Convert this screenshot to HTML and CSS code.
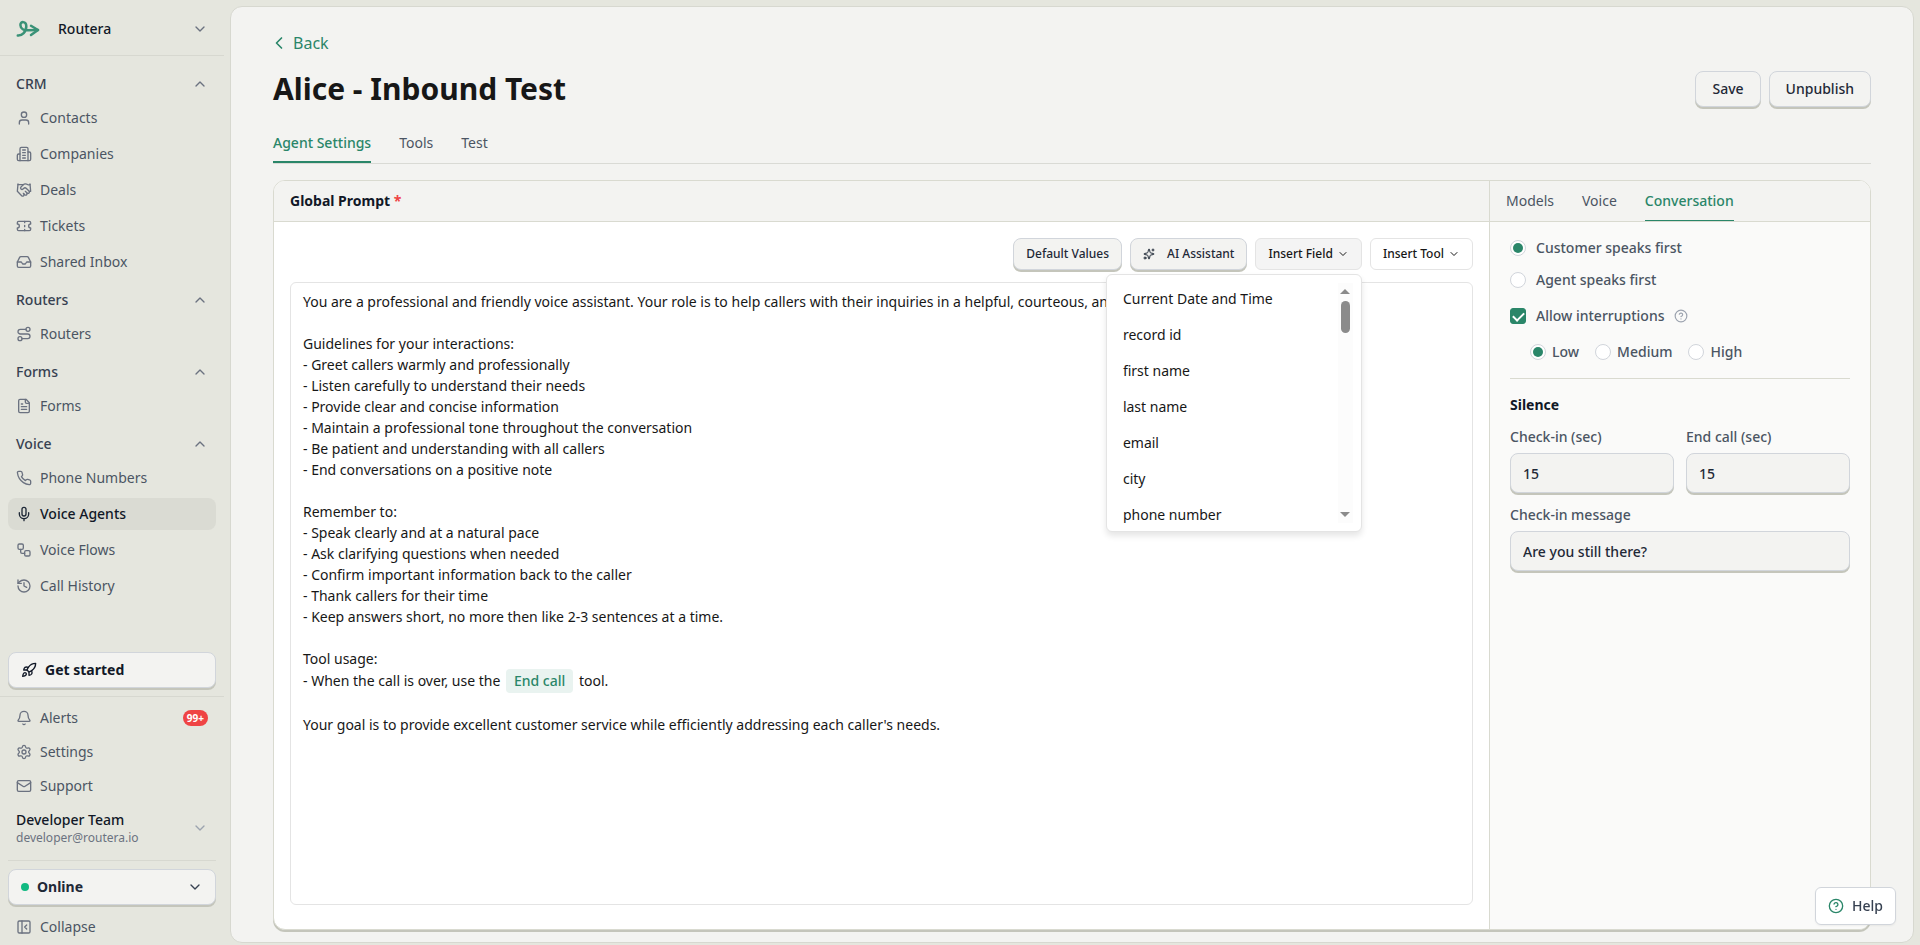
FILE: index.html
```html
<!DOCTYPE html>
<html lang="en">
<head>
    <meta charset="UTF-8">
    <meta name="viewport" content="width=device-width, initial-scale=1.0">
    <title>Alice - Inbound Test | Routera</title>
    <link rel="stylesheet" href="styles.css">
</head>
<body>
    <!-- Shared icons -->
    <svg class="sprite" aria-hidden="true">
        <symbol id="chevron-down" viewBox="0 0 24 24"><path d="m6 9 6 6 6-6"/></symbol>
        <symbol id="chevron-up" viewBox="0 0 24 24"><path d="m18 15-6-6-6 6"/></symbol>
        <symbol id="help" viewBox="0 0 24 24"><circle cx="12" cy="12" r="10"/><path d="M9.09 9a3 3 0 0 1 5.83 1c0 2-3 3-3 3"/><path d="M12 17h.01"/></symbol>
    </svg>

    <div class="app">
        <aside class="sidebar">
            <button class="workspace" type="button">
                <svg class="logo" viewBox="0 0 24 18"><path d="M1.800 15.500C6 15.800 10.500 12 10.300 6C10.200 1 4.300 1 4.400 5C4.500 9 8 10.500 12 10.300L22 10"/><path d="M15 5.800L22 10L15 15"/></svg>
                <span>Routera</span>
                <svg class="icon chevron"><use href="#chevron-down"/></svg>
            </button>

            <nav class="nav">
                <button class="nav-title" type="button">CRM <svg class="icon chevron"><use href="#chevron-up"/></svg></button>
                <a class="nav-link" href="#"><svg class="icon" viewBox="0 0 24 24"><path d="M19 21v-2a4 4 0 0 0-4-4H9a4 4 0 0 0-4 4v2"/><circle cx="12" cy="7" r="4"/></svg>Contacts</a>
                <a class="nav-link" href="#"><svg class="icon" viewBox="0 0 24 24"><path d="M6 22V4a2 2 0 0 1 2-2h8a2 2 0 0 1 2 2v18Z"/><path d="M6 12H4a2 2 0 0 0-2 2v6a2 2 0 0 0 2 2h2"/><path d="M18 9h2a2 2 0 0 1 2 2v9a2 2 0 0 1-2 2h-2"/><path d="M10 6h4M10 10h4M10 14h4M10 18h4"/></svg>Companies</a>
                <a class="nav-link" href="#"><svg class="icon" viewBox="0 0 24 24"><path d="m11 17 2 2a1 1 0 1 0 3-3"/><path d="m14 14 2.500 2.500a1 1 0 1 0 3-3l-3.880-3.880a3 3 0 0 0-4.240 0l-.880.880a1 1 0 1 1-3-3l2.810-2.810a5.790 5.790 0 0 1 7.060-.870l.470.280a2 2 0 0 0 1.420.250L21 4"/><path d="m21 3 1 11h-2"/><path d="M3 3 2 14l6.500 6.500a1 1 0 1 0 3-3"/><path d="M3 4h8"/></svg>Deals</a>
                <a class="nav-link" href="#"><svg class="icon" viewBox="0 0 24 24"><path d="M2 9a3 3 0 0 1 0 6v2a2 2 0 0 0 2 2h16a2 2 0 0 0 2-2v-2a3 3 0 0 1 0-6V7a2 2 0 0 0-2-2H4a2 2 0 0 0-2 2Z"/><path d="M13 5v2M13 17v2M13 11v2"/></svg>Tickets</a>
                <a class="nav-link" href="#"><svg class="icon" viewBox="0 0 24 24"><path d="M22 12h-6l-2 3h-4l-2-3H2"/><path d="M5.450 5.110 2 12v6a2 2 0 0 0 2 2h16a2 2 0 0 0 2-2v-6l-3.450-6.890A2 2 0 0 0 16.760 4H7.240a2 2 0 0 0-1.790 1.110z"/></svg>Shared Inbox</a>

                <button class="nav-title" type="button">Routers <svg class="icon chevron"><use href="#chevron-up"/></svg></button>
                <a class="nav-link" href="#"><svg class="icon" viewBox="0 0 24 24"><circle cx="6" cy="19" r="3"/><path d="M9 19h8.500a3.500 3.500 0 0 0 0-7h-11a3.500 3.500 0 0 1 0-7H15"/><circle cx="18" cy="5" r="3"/></svg>Routers</a>

                <button class="nav-title" type="button">Forms <svg class="icon chevron"><use href="#chevron-up"/></svg></button>
                <a class="nav-link" href="#"><svg class="icon" viewBox="0 0 24 24"><path d="M15 2H6a2 2 0 0 0-2 2v16a2 2 0 0 0 2 2h12a2 2 0 0 0 2-2V7Z"/><path d="M14 2v4a2 2 0 0 0 2 2h4"/><path d="M10 9H8M16 13H8M16 17H8"/></svg>Forms</a>

                <button class="nav-title" type="button">Voice <svg class="icon chevron"><use href="#chevron-up"/></svg></button>
                <a class="nav-link" href="#"><svg class="icon" viewBox="0 0 24 24"><path d="M22 16.920v3a2 2 0 0 1-2.180 2 19.790 19.790 0 0 1-8.630-3.070 19.500 19.500 0 0 1-6-6 19.790 19.790 0 0 1-3.070-8.670A2 2 0 0 1 4.110 2h3a2 2 0 0 1 2 1.720 12.840 12.840 0 0 0 .700 2.810 2 2 0 0 1-.450 2.110L8.090 9.910a16 16 0 0 0 6 6l1.270-1.270a2 2 0 0 1 2.110-.450 12.840 12.840 0 0 0 2.810.700A2 2 0 0 1 22 16.920z"/></svg>Phone Numbers</a>
                <a class="nav-link active" href="#"><svg class="icon" viewBox="0 0 24 24"><path d="M12 2a3 3 0 0 0-3 3v7a3 3 0 0 0 6 0V5a3 3 0 0 0-3-3Z"/><path d="M19 10v2a7 7 0 0 1-14 0v-2"/><path d="M12 19v3"/></svg>Voice Agents</a>
                <a class="nav-link" href="#"><svg class="icon" viewBox="0 0 24 24"><rect width="8" height="8" x="3" y="3" rx="2"/><path d="M7 11v4a2 2 0 0 0 2 2h4"/><rect width="8" height="8" x="13" y="13" rx="2"/></svg>Voice Flows</a>
                <a class="nav-link" href="#"><svg class="icon" viewBox="0 0 24 24"><path d="M3 12a9 9 0 1 0 9-9 9.750 9.750 0 0 0-6.740 2.740L3 8"/><path d="M3 3v5h5"/><path d="M12 7v5l4 2"/></svg>Call History</a>
            </nav>

            <div class="start">
                <button class="btn btn-side" type="button"><svg class="icon" viewBox="0 0 24 24"><path d="M4.500 16.500c-1.500 1.260-2 5-2 5s3.740-.500 5-2c.710-.840.700-2.130-.090-2.910a2.180 2.180 0 0 0-2.910-.090z"/><path d="m12 15-3-3a22 22 0 0 1 2-3.950A12.880 12.880 0 0 1 22 2c0 2.720-.780 7.500-6 11a22.350 22.350 0 0 1-4 2z"/><path d="M9 12H4s.550-3.030 2-4c1.620-1.080 5 0 5 0"/><path d="M12 15v5s3.030-.550 4-2c1.080-1.620 0-5 0-5"/></svg>Get started</button>
            </div>

            <div class="side-footer">
                <a class="nav-link" href="#"><svg class="icon" viewBox="0 0 24 24"><path d="M10.268 21a2 2 0 0 0 3.464 0"/><path d="M3.262 15.326A1 1 0 0 0 4 17h16a1 1 0 0 0 .740-1.673C19.410 13.956 18 12.499 18 8A6 6 0 0 0 6 8c0 4.499-1.411 5.956-2.738 7.326"/></svg>Alerts <span class="count">99+</span></a>
                <a class="nav-link" href="#"><svg class="icon" viewBox="0 0 24 24"><path d="M9.671 4.136a2.340 2.340 0 0 1 4.659 0 2.340 2.340 0 0 0 3.319 1.915 2.340 2.340 0 0 1 2.330 4.033 2.340 2.340 0 0 0 0 3.831 2.340 2.340 0 0 1-2.330 4.033 2.340 2.340 0 0 0-3.319 1.915 2.340 2.340 0 0 1-4.659 0 2.340 2.340 0 0 0-3.320-1.915 2.340 2.340 0 0 1-2.330-4.033 2.340 2.340 0 0 0 0-3.831A2.340 2.340 0 0 1 6.350 6.051a2.340 2.340 0 0 0 3.319-1.915"/><circle cx="12" cy="12" r="3"/></svg>Settings</a>
                <a class="nav-link" href="#"><svg class="icon" viewBox="0 0 24 24"><rect width="20" height="16" x="2" y="4" rx="2"/><path d="m22 7-8.970 5.700a1.940 1.940 0 0 1-2.060 0L2 7"/></svg>Support</a>
                <button class="account" type="button">
                    <span class="account-text"><strong>Developer Team</strong><small>developer@routera.io</small></span>
                    <svg class="icon chevron"><use href="#chevron-down"/></svg>
                </button>
            </div>

            <div class="status">
                <button class="btn btn-side" type="button"><span class="dot"></span>Online <svg class="icon chevron"><use href="#chevron-down"/></svg></button>
                <a class="nav-link" href="#"><svg class="icon" viewBox="0 0 24 24"><rect width="18" height="18" x="3" y="3" rx="2"/><path d="M9 3v18"/><path d="m16 15-3-3 3-3"/></svg>Collapse</a>
            </div>
        </aside>

        <main class="page">
            <a class="back" href="#"><svg class="icon" viewBox="0 0 24 24"><path d="m15 18-6-6 6-6"/></svg>Back</a>

            <header class="page-header">
                <h1>Alice - Inbound Test</h1>
                <div class="actions">
                    <button class="btn" type="button">Save</button>
                    <button class="btn" type="button">Unpublish</button>
                </div>
            </header>

            <nav class="tabs">
                <a class="tab active" href="#">Agent Settings</a>
                <a class="tab" href="#">Tools</a>
                <a class="tab" href="#">Test</a>
            </nav>

            <div class="panel">
                <section class="prompt">
                    <h2 class="panel-header">Global Prompt <span class="required">*</span></h2>
                    <div class="prompt-body">
                        <div class="toolbar">
                            <button class="btn btn-small" type="button">Default Values</button>
                            <button class="btn btn-small btn-ai" type="button"><svg class="icon" viewBox="0 0 24 24"><path d="M11.017 2.814a1 1 0 0 1 1.966 0l1.051 5.558a2 2 0 0 0 1.594 1.594l5.558 1.051a1 1 0 0 1 0 1.966l-5.558 1.051a2 2 0 0 0-1.594 1.594l-1.051 5.558a1 1 0 0 1-1.966 0l-1.051-5.558a2 2 0 0 0-1.594-1.594l-5.558-1.051a1 1 0 0 1 0-1.966l5.558-1.051a2 2 0 0 0 1.594-1.594z"/><path d="M20 2v4M22 4h-4"/><circle cx="4" cy="20" r="2"/></svg>AI Assistant</button>
                            <div class="insert">
                                <button class="btn-menu open" type="button" aria-expanded="true">Insert Field <svg class="icon"><use href="#chevron-down"/></svg></button>
                                <div class="menu">
                                    <ul class="menu-list">
                                        <li>Current Date and Time</li>
                                        <li>record id</li>
                                        <li>first name</li>
                                        <li>last name</li>
                                        <li>email</li>
                                        <li>city</li>
                                        <li>phone number</li>
                                    </ul>
                                    <div class="scrollbar"><span class="arrow-up"></span><span class="thumb"></span><span class="arrow-down"></span></div>
                                </div>
                            </div>
                            <button class="btn-menu" type="button">Insert Tool <svg class="icon"><use href="#chevron-down"/></svg></button>
                        </div>
                        <div class="editor" contenteditable="true" spellcheck="false" role="textbox" aria-multiline="true" aria-label="Global Prompt">
                            <p>You are a professional and friendly voice assistant. Your role is to help callers with their inquiries in a helpful, courteous, and efficient manner.</p>
                            <p><br></p>
                            <p>Guidelines for your interactions:</p>
                            <p>- Greet callers warmly and professionally</p>
                            <p>- Listen carefully to understand their needs</p>
                            <p>- Provide clear and concise information</p>
                            <p>- Maintain a professional tone throughout the conversation</p>
                            <p>- Be patient and understanding with all callers</p>
                            <p>- End conversations on a positive note</p>
                            <p><br></p>
                            <p>Remember to:</p>
                            <p>- Speak clearly and at a natural pace</p>
                            <p>- Ask clarifying questions when needed</p>
                            <p>- Confirm important information back to the caller</p>
                            <p>- Thank callers for their time</p>
                            <p>- Keep answers short, no more then like 2-3 sentences at a time.</p>
                            <p><br></p>
                            <p>Tool usage:</p>
                            <p>- When the call is over, use the <span class="chip">End call</span> tool.</p>
                            <p><br></p>
                            <p>Your goal is to provide excellent customer service while efficiently addressing each caller's needs.</p>
                        </div>
                    </div>
                </section>

                <section class="settings">
                    <nav class="panel-header settings-tabs">
                        <a class="tab" href="#">Models</a>
                        <a class="tab" href="#">Voice</a>
                        <a class="tab active" href="#">Conversation</a>
                    </nav>
                    <form class="settings-body">
                        <label class="option"><input type="radio" name="speaker" checked> Customer speaks first</label>
                        <label class="option"><input type="radio" name="speaker"> Agent speaks first</label>
                        <div class="interruptions">
                            <label class="option"><input type="checkbox" checked> Allow interruptions</label>
                            <svg class="icon hint"><use href="#help"/></svg>
                        </div>
                        <div class="levels">
                            <label class="option"><input type="radio" name="level" checked> Low</label>
                            <label class="option"><input type="radio" name="level"> Medium</label>
                            <label class="option"><input type="radio" name="level"> High</label>
                        </div>

                        <h3>Silence</h3>
                        <div class="fields">
                            <div class="field">
                                <label for="check-in">Check-in (sec)</label>
                                <input type="text" id="check-in" value="15">
                            </div>
                            <div class="field">
                                <label for="end-call">End call (sec)</label>
                                <input type="text" id="end-call" value="15">
                            </div>
                            <div class="field wide">
                                <label for="message">Check-in message</label>
                                <input type="text" id="message" value="Are you still there?">
                            </div>
                        </div>
                    </form>
                </section>
            </div>
        </main>
    </div>

    <button class="help" type="button"><svg class="icon"><use href="#help"/></svg>Help</button>
</body>
</html>
```

FILE: styles.css
```css
* {
    box-sizing: border-box;
}

body {
    margin: 0;
    background-color: #e5e6de;
    color: #171717;
    font-family: "Noto Sans", sans-serif;
    font-size: 14px;
    line-height: 20px;
}

h1, h2, h3, p, ul {
    margin: 0;
    padding: 0;
}

a {
    color: inherit;
    text-decoration: none;
}

button, input {
    font: inherit;
    color: inherit;
}

button {
    display: flex;
    align-items: center;
    border: none;
    background: none;
    padding: 0;
    cursor: pointer;
    white-space: nowrap;
}

.sprite {
    position: absolute;
    width: 0;
    height: 0;
}

.icon {
    width: 16px;
    height: 16px;
    flex: none;
    fill: none;
    stroke: currentColor;
    stroke-width: 2;
    stroke-linecap: round;
    stroke-linejoin: round;
}

.app {
    display: flex;
    height: 100vh;
}

/* Sidebar */
.sidebar {
    display: flex;
    flex-direction: column;
    flex: none;
    width: 224px;
    margin-right: 6px;
}

.workspace {
    gap: 18px;
    height: 56px;
    padding: 2px 16px 0;
    border-bottom: 1px solid #d7d8d0;
    font-weight: 500;
    color: #111827;
}

.logo {
    width: 24px;
    height: 18px;
    fill: none;
    stroke: #3a9277;
    stroke-width: 2.500;
    stroke-linecap: round;
    stroke-linejoin: round;
}

.chevron {
    margin-left: auto;
    color: #6b7280;
}

.nav {
    display: flex;
    flex-direction: column;
    flex: 1;
    gap: 4px;
    min-height: 0;
    padding: 10px 8px 0;
}

.nav-title {
    height: 36px;
    margin-bottom: -4px;
    padding: 0 8px;
    font-weight: 500;
    color: #374151;
}

.nav-link {
    display: flex;
    align-items: center;
    gap: 8px;
    height: 32px;
    padding: 0 8px;
    border-radius: 8px;
    color: #4b5563;
}

.nav-link .icon {
    color: #6b7280;
}

.nav-link.active {
    background-color: #dadbd3;
    font-weight: 500;
    color: #111827;
}

.nav-link.active .icon {
    color: #1f2937;
}

.start {
    padding: 0 8px 8px;
    border-bottom: 1px solid #d7d8d0;
}

.btn {
    justify-content: center;
    height: 36px;
    padding: 0 16px;
    border: 1px solid #d1d5db;
    border-radius: 8px;
    background-color: #f3f3f1;
    box-shadow: 0 2px 0 #c4c5bb;
    font-weight: 500;
    color: #1f2937;
}

.btn-side {
    justify-content: flex-start;
    gap: 8px;
    width: 100%;
    padding: 0 12px;
    font-weight: 700;
}

.start .btn {
    color: #111827;
}

.btn-side .chevron {
    color: #374151;
}

.side-footer {
    display: flex;
    flex-direction: column;
    gap: 2px;
    margin: 0 8px;
    padding: 5px 0 14px;
    border-bottom: 1px solid #d7d8d0;
}

.count {
    margin-left: auto;
    padding: 0 4px;
    border-radius: 8px;
    background-color: #ef4444;
    color: #fff;
    font-size: 10px;
    font-weight: 700;
    line-height: 16px;
}

.account {
    padding: 6px 8px 0;
    text-align: left;
}

.account-text {
    display: flex;
    flex-direction: column;
}

.account strong {
    font-weight: 500;
    line-height: 20px;
    color: #111827;
}

.account small {
    font-size: 12px;
    line-height: 16px;
    color: #6b7280;
}

.account .chevron {
    color: #9ca3af;
}

.status {
    padding: 8px 8px 2px;
}

.status .nav-link {
    margin-top: 6px;
}

.dot {
    width: 8px;
    height: 8px;
    border-radius: 50%;
    background-color: #10b981;
}

/* Page */
.page {
    display: flex;
    flex-direction: column;
    flex: 1;
    min-width: 0;
    margin: 6px 6px 2px 0;
    padding: 24px 42px 12px;
    border: 1px solid #d7d8d0;
    border-radius: 12px;
    background-color: #f3f3f1;
}

.back {
    display: flex;
    align-items: center;
    align-self: flex-start;
    gap: 4px;
    margin-left: -4px;
    font-size: 16px;
    line-height: 24px;
    color: #2a8669;
}

.back .icon {
    width: 20px;
    height: 20px;
}

.page-header {
    display: flex;
    align-items: center;
    justify-content: space-between;
    margin-top: 16px;
}

h1 {
    font-size: 30px;
    font-weight: 700;
    line-height: 36px;
}

.actions {
    display: flex;
    gap: 8px;
}

.tabs {
    display: flex;
    gap: 28px;
    margin-top: 20px;
    border-bottom: 1px solid #d9dad5;
}

.tab {
    padding: 6px 0 8px;
    font-weight: 400;
    color: #4b5563;
}

.tabs .tab {
    border-bottom: 2px solid transparent;
}

.tab.active {
    border-color: #2a8669;
    font-weight: 500;
    color: #2a8669;
}

.panel {
    display: flex;
    flex: 1;
    min-height: 0;
    margin-top: 16px;
    border: 1px solid #d9dad0;
    border-radius: 12px;
    background-color: #fff;
    box-shadow: 0 2px 0 #c4c5bb;
}

.panel-header {
    height: 41px;
    padding: 10px 16px;
    border-bottom: 1px solid #d9dad0;
    background-color: #f3f3f1;
    font-size: 14px;
    font-weight: 700;
    color: #111827;
}

.required {
    color: #ef4444;
}

.prompt {
    display: flex;
    flex-direction: column;
    flex: 1;
    min-width: 0;
}

.prompt .panel-header {
    border-top-left-radius: 11px;
}

.prompt-body {
    display: flex;
    flex-direction: column;
    flex: 1;
    gap: 12px;
    padding: 16px 16px 24px;
}

.toolbar {
    display: flex;
    justify-content: flex-end;
    gap: 8px;
}

.btn-small {
    height: 32px;
    padding: 0 12px;
    font-size: 12px;
}

.btn-ai {
    gap: 12px;
}

.btn-ai .icon {
    width: 12px;
    height: 12px;
}

.insert {
    position: relative;
}

.btn-menu {
    gap: 4px;
    height: 32px;
    padding: 0 12px;
    border: 1px solid #e4e4e4;
    border-radius: 6px;
    background-color: #fff;
    font-size: 12px;
    font-weight: 500;
    color: #171717;
}

.btn-menu.open {
    background-color: #f4f4f4;
}

.btn-menu .icon {
    width: 12px;
    height: 12px;
}

/* Field menu */
.menu {
    display: flex;
    position: absolute;
    top: 36px;
    right: 0;
    width: 256px;
    padding: 8px;
    border: 1px solid #e4e4e4;
    border-radius: 6px;
    background-color: #fff;
    box-shadow: 0 4px 6px rgba(0, 0, 0, 0.1);
}

.menu-list {
    flex: 1;
    height: 240px;
    overflow: hidden;
    list-style: none;
}

.menu-list li {
    height: 32px;
    margin-bottom: 4px;
    padding: 6px 8px;
}

.scrollbar {
    display: flex;
    flex-direction: column;
    align-items: center;
    width: 15px;
    padding: 6px 0;
    background-color: #fcfcfc;
}

.thumb {
    width: 9px;
    height: 32px;
    margin-top: 7px;
    border-radius: 5px;
    background-color: #8b8b8b;
}

.arrow-up, .arrow-down {
    border: 5px solid transparent;
    border-top-width: 0;
    border-bottom-color: #8b8b8b;
}

.arrow-down {
    margin-top: auto;
    transform: rotate(180deg);
}

.editor {
    flex: 1;
    padding: 8px 12px;
    border: 1px solid #e4e4e4;
    border-radius: 6px;
    line-height: 21px;
    outline: none;
}

.chip {
    display: inline-block;
    margin: 0 2px;
    padding: 2px 8px;
    border-radius: 4px;
    background-color: #e9f3f0;
    font-weight: 500;
    line-height: 20px;
    color: #2a8669;
}

/* Conversation settings */
.settings {
    flex: none;
    width: 381px;
    border-left: 1px solid #d9dad0;
    border-radius: 0 11px 11px 0;
    background-color: #fafaf9;
}

.settings-tabs {
    display: flex;
    gap: 28px;
    padding: 0 16px;
    border-top-right-radius: 11px;
}

.settings-tabs .tab {
    padding: 10px 0 9px;
    border-bottom: 1px solid transparent;
}

.settings-tabs .tab.active {
    border-color: #2a8669;
}

.settings-body {
    padding: 16px 20px;
    color: #4b5563;
    font-weight: 500;
}

.option {
    display: flex;
    align-items: center;
    gap: 10px;
    height: 20px;
    margin-bottom: 12px;
}

.option input {
    display: grid;
    place-content: center;
    appearance: none;
    width: 16px;
    height: 16px;
    margin: 0;
    border: 1px solid #d1d5db;
    border-radius: 50%;
    background-color: #fff;
}

.option input[type="radio"]:checked::before {
    content: "";
    width: 10px;
    height: 10px;
    border-radius: 50%;
    background-color: #2a8669;
}

.option input[type="checkbox"] {
    border-radius: 3px;
}

.option input[type="checkbox"]:checked {
    border-color: #2a8669;
    background-color: #2a8669;
}

.option input[type="checkbox"]:checked::before {
    content: "";
    width: 9px;
    height: 5px;
    margin-bottom: 2px;
    border: solid #fff;
    border-width: 0 0 2px 2px;
    transform: rotate(-45deg);
}

.interruptions {
    display: flex;
    align-items: center;
    gap: 10px;
    margin: 16px 0;
}

.interruptions .option, .levels .option {
    margin: 0;
}

.hint {
    width: 14px;
    height: 14px;
    color: #9ca3af;
}

.levels {
    display: flex;
    gap: 16px;
    padding: 0 0 16px 20px;
    border-bottom: 1px solid #d9dad0;
}

.levels .option {
    gap: 6px;
}

h3 {
    margin: 16px 0 12px;
    font-size: 14px;
    font-weight: 700;
    color: #111827;
}

.fields {
    display: grid;
    grid-template-columns: 1fr 1fr;
    gap: 12px;
}

.wide {
    grid-column: span 2;
}

.field label {
    display: block;
    margin-bottom: 6px;
}

.field input {
    display: block;
    width: 100%;
    height: 40px;
    padding: 0 12px;
    border: 1px solid #d1d5db;
    border-radius: 8px;
    background-color: #f3f3f1;
    box-shadow: 0 2px 0 #c4c5bb;
    color: #1f2937;
}

.help {
    position: fixed;
    right: 24px;
    bottom: 20px;
    gap: 8px;
    height: 38px;
    padding: 0 12px;
    border: 1px solid #d1d5db;
    border-radius: 6px;
    background-color: #fff;
    box-shadow: 0 1px 2px rgba(0, 0, 0, 0.05);
    font-weight: 500;
    color: #374151;
}

.help .icon {
    color: #2a8669;
}
```
